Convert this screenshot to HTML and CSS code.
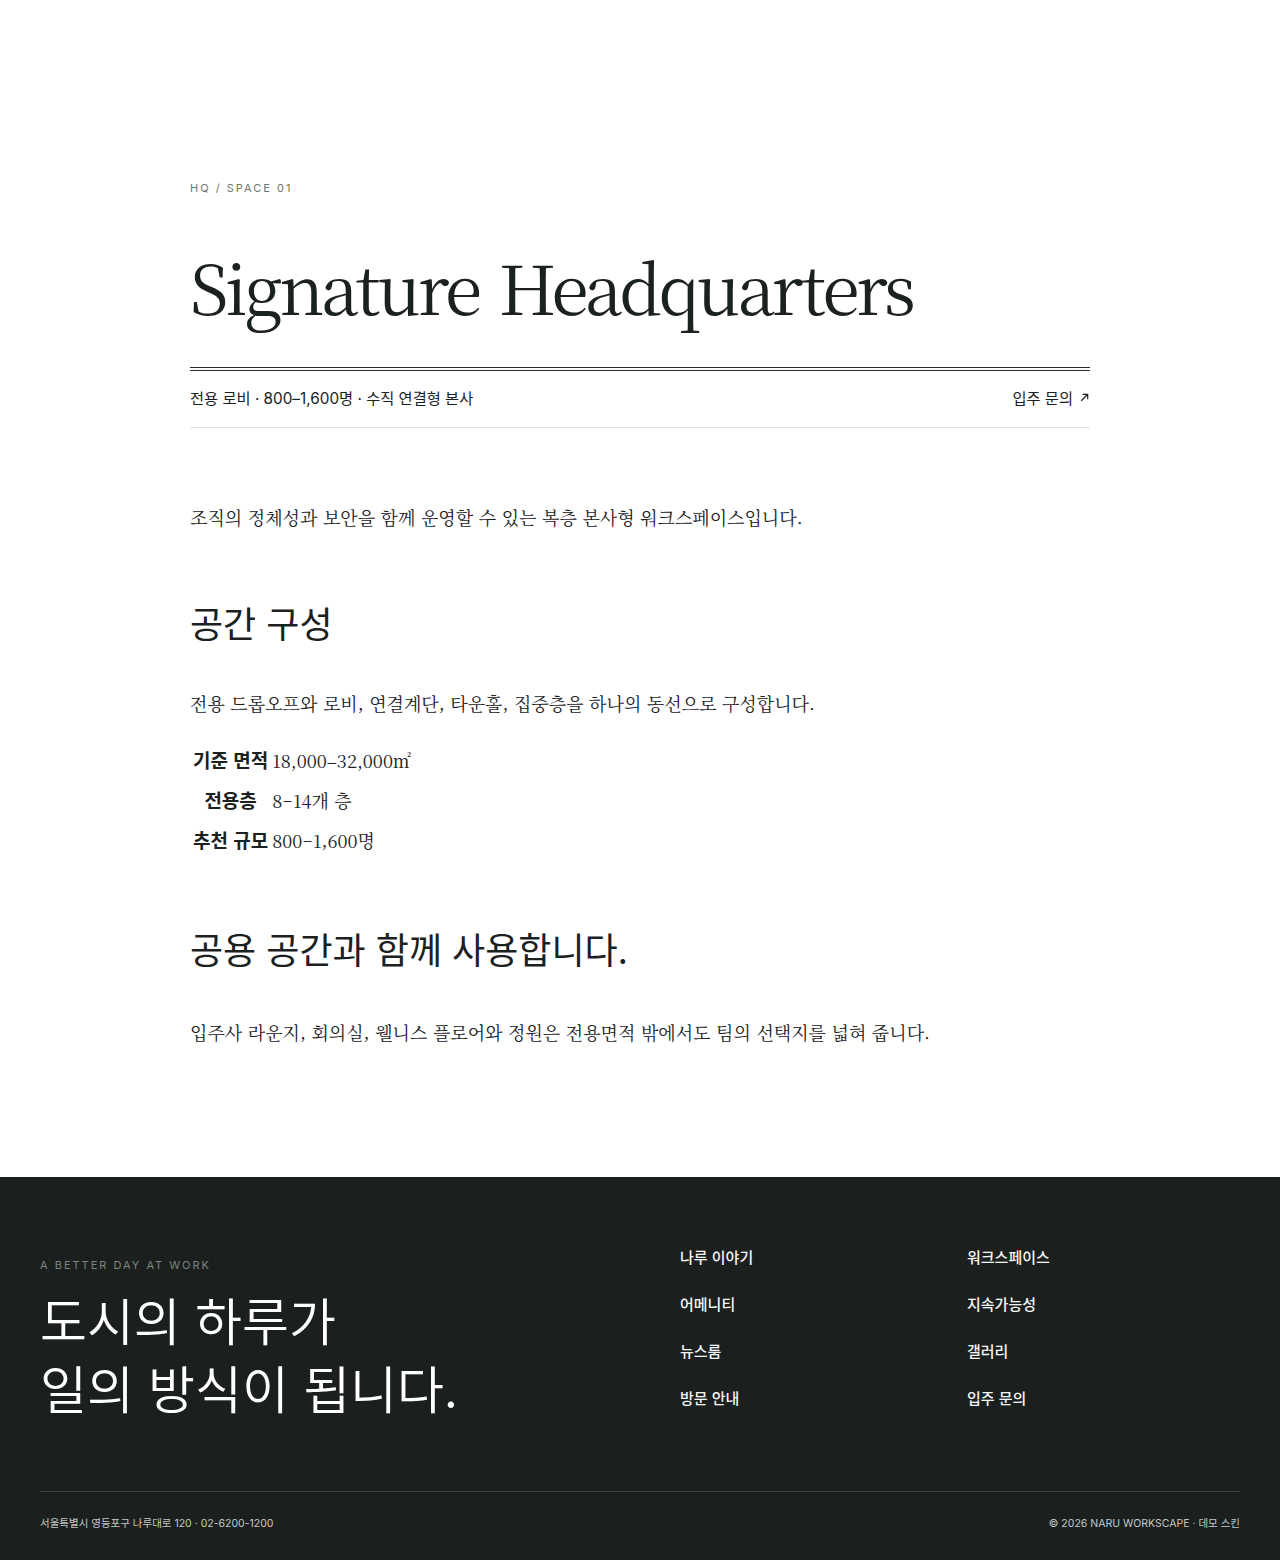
FILE: index.html
```html
<!DOCTYPE html>
<html lang="ko">
<head>
<meta charset="utf-8">
<title>Signature Headquarters</title>
<link rel="stylesheet" href="styles.css">
</head>
<body>
<main class="page">
  <p class="eyebrow">HQ / SPACE 01</p>
  <h1 class="title">Signature Headquarters</h1>
  <div class="meta">
    <span class="meta-text">전용 로비 · 800–1,600명 · 수직 연결형 본사</span>
    <a class="meta-link" href="#">입주 문의 <svg class="arrow" viewBox="0 0 12 12" width="11" height="11"><path d="M2.5 9.5 L9.5 2.5 M4 2.5 H9.5 V8" fill="none" stroke="currentColor" stroke-width="1.3"/></svg></a>
  </div>
  <p class="lead">조직의 정체성과 보안을 함께 운영할 수 있는 복층 본사형 워크스페이스입니다.</p>
  <h2 class="section-title">공간 구성</h2>
  <p class="body">전용 드롭오프와 로비, 연결계단, 타운홀, 집중층을 하나의 동선으로 구성합니다.</p>
  <table class="specs">
    <tr><th>기준 면적</th><td>18,000–32,000㎡</td></tr>
    <tr><th>전용층</th><td>8–14개 층</td></tr>
    <tr><th>추천 규모</th><td>800–1,600명</td></tr>
  </table>
  <h2 class="section-title second">공용 공간과 함께 사용합니다.</h2>
  <p class="body closing">입주사 라운지, 회의실, 웰니스 플로어와 정원은 전용면적 밖에서도 팀의 선택지를 넓혀 줍니다.</p>
</main>
<footer class="footer">
  <div class="footer-top">
    <div class="footer-brand">
      <p class="footer-eyebrow">A BETTER DAY AT WORK</p>
      <p class="footer-slogan">도시의 하루가<br>일의 방식이 됩니다.</p>
    </div>
    <ul class="footer-links">
      <li><a href="#">나루 이야기</a></li>
      <li><a href="#">어메니티</a></li>
      <li><a href="#">뉴스룸</a></li>
      <li><a href="#">방문 안내</a></li>
    </ul>
    <ul class="footer-links">
      <li><a href="#">워크스페이스</a></li>
      <li><a href="#">지속가능성</a></li>
      <li><a href="#">갤러리</a></li>
      <li><a href="#">입주 문의</a></li>
    </ul>
  </div>
  <div class="footer-bottom">
    <span>서울특별시 영등포구 나루대로 120 · 02-6200-1200</span>
    <span>© 2026 NARU WORKSCAPE · 데모 스킨</span>
  </div>
</footer>
</body>
</html>
```
FILE: styles.css
```css
* { box-sizing: border-box; }
body {
  margin: 0;
  background: #ffffff;
  color: #1b211f;
  font-family: "Noto Serif CJK KR", "Liberation Serif", "Noto Sans CJK KR", serif;
}
.page {
  width: 900px;
  margin: 0 auto;
  padding: 180px 0 131px;
}
.eyebrow {
  margin: 0;
  font-family: Inter, "Noto Sans CJK KR", sans-serif;
  font-size: 11px;
  line-height: 16px;
  letter-spacing: 2px;
  color: #6d7471;
}
.title {
  margin: 40px 0 0;
  height: 100px;
  font-family: "Noto Serif CJK KR", "Liberation Serif", serif;
  font-weight: 400;
  font-size: 68px;
  line-height: 100px;
  letter-spacing: -3.4px;
  word-spacing: 2px;
  color: #1b211f;
}
.meta {
  margin-top: 31px;
  border-top: 4px double #26302c;
  border-bottom: 1px solid #e2e4e3;
  display: flex;
  justify-content: space-between;
  align-items: center;
  height: 61px;
  padding-bottom: 4px;
  font-family: Inter, "Noto Sans CJK KR", sans-serif;
  font-size: 15.3px;
  color: #1b211f;
}
.meta-link {
  color: #1b211f;
  text-decoration: none;
  display: flex;
  align-items: center;
  gap: 6px;
}
.arrow { display: block; }
.lead {
  margin: 75px 0 0;
  font-size: 18px;
  line-height: 28px;
}
.section-title {
  margin: 67px 0 0;
  font-family: "Noto Sans CJK KR", sans-serif;
  font-weight: 400;
  font-size: 36px;
  line-height: 48px;
}
.section-title.second { margin-top: 63px; }
.body {
  margin: 43px 0 0;
  font-size: 18px;
  line-height: 28px;
}
.body.closing { margin-top: 46px; }
.specs {
  margin-top: 22px;
  font-size: 18px;
}
.specs th {
  font-family: "Noto Sans CJK KR", sans-serif;
  font-weight: 700;
  font-size: 19px;
  line-height: 36px;
  text-align: center;
}
.specs td {
  line-height: 36px;
  text-align: left;
}
.footer {
  background: #1b201e;
  color: #ffffff;
  padding: 68px 40px 28px;
  font-family: "Noto Sans CJK KR", sans-serif;
}
.footer-top {
  display: grid;
  grid-template-columns: 640px 287px 1fr;
  padding-bottom: 70px;
  border-bottom: 1px solid #3b423f;
}
.footer-eyebrow {
  margin: 12px 0 0;
  font-family: Inter, sans-serif;
  font-size: 11px;
  line-height: 16px;
  letter-spacing: 2px;
  color: #7c8480;
}
.footer-slogan {
  margin: 12px 0 0;
  font-size: 51px;
  line-height: 68px;
  font-weight: 350;
  color: #ffffff;
}
.footer-links {
  list-style: none;
  margin: 0;
  padding: 0;
  display: flex;
  flex-direction: column;
  gap: 24px;
}
.footer-links li { line-height: 22px; }
.footer-links a {
  color: #f4f5f4;
  text-decoration: none;
  font-size: 15px;
  font-weight: 500;
  line-height: 22px;
}
.footer-bottom {
  display: flex;
  justify-content: space-between;
  padding-top: 24px;
  font-family: Inter, "Noto Sans CJK KR", sans-serif;
  font-size: 10.5px;
  line-height: 16px;
  color: #c3c8c5;
}
```
